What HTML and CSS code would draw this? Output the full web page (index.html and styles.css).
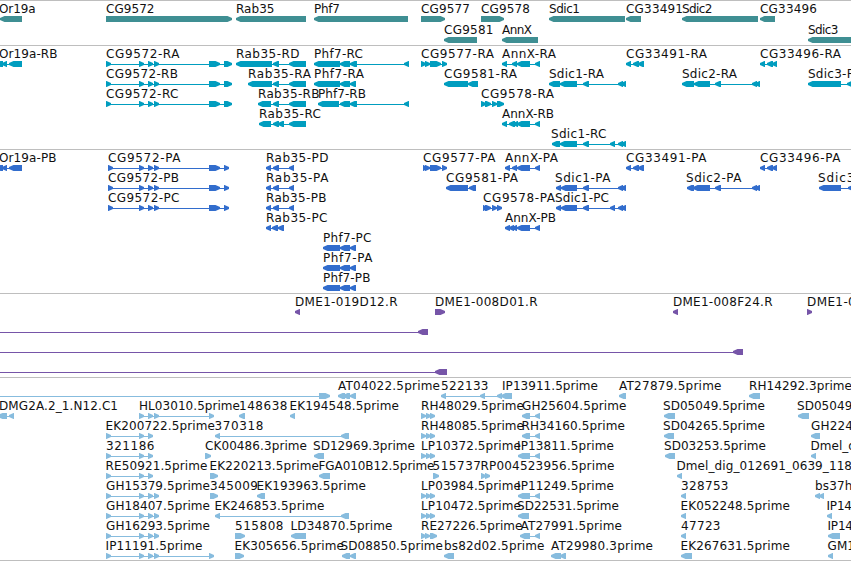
FILE: index.html
```
<!DOCTYPE html>
<html lang="en">
<head>
    <meta charset="UTF-8">
    <meta name="viewport" content="width=device-width, initial-scale=1.0">
    <title>Genome Browser</title>
    <link rel="stylesheet" href="styles.css">
</head>
<body>
    <main class="browser">
        <section class="track genes" id="genes"></section>
        <section class="track transcripts" id="transcripts"></section>
        <section class="track proteins" id="proteins"></section>
        <section class="track clones" id="clones"></section>
        <section class="track ests" id="ests"></section>
    </main>

    <script src="tracks.js"></script>
</body>
</html>
```
FILE: styles.css
```
* {
    margin: 0;
    padding: 0;
    box-sizing: border-box;
}
body {
    background: #fff;
    overflow: hidden;
}
.browser {
    width: 851px;
    height: 561px;
    overflow: hidden;
    border-bottom: 1px solid #bebebe;
}
.track {
    border-top: 1px solid #bebebe;
}
.row {
    display: block;
    width: 100%;
    height: 20px;
    overflow: visible;
}
.row text {
    font-family: "DejaVu Sans", sans-serif;
    font-size: 12px;
    fill: #111;
}
/* arrows and the intron line between them */
.row path, .row rect {
    fill: var(--glyph);
}

.genes {
    --glyph: #3f8f93;
    height: 45px;
}
.genes .row {
    height: 21px;
}
.transcripts {
    --glyph: #009dbf;
    height: 104px;
}
.proteins {
    --glyph: #326dcd;
    height: 144px;
}
.clones {
    --glyph: #7655a8;
    height: 84px;
}
.ests {
    --glyph: #87bcde;
    height: 183px;
}
```
FILE: tracks.js
```
// Each feature: [label, label start, label end, strand, blocks]
const cgR = [[106, 111], [139, 144], [148, 153], [154, 159], [209, 220], [224, 232]];
const cgP = [[108, 113], [139, 144], [148, 153], [154, 159], [209, 220], [224, 229]];
const or19a = [[-4, 3], [2, 7], [9, 22]];
const rabP = [[266, 271], [273, 279], [289, 294]];
const phfP = [[323, 340], [340, 350], [350, 356]];
const cg33491 = [[626, 631], [633, 639], [638, 644]];
const cg33496 = [[760, 765], [767, 773], [772, 777]];
const est3 = [[106, 111], [139, 144], [148, 153]];
const est4 = [[106, 111], [139, 144], [148, 153], [154, 159]];
const lp = [[421, 426], [426, 431], [430, 435]];
const ip = [[518, 530], [535, 540]];

const tracks = {
    genes: [
        [
            ['Or19a', -1, 35.5, '<', [[0, 22]]],
            ['CG9572', 106, 154.5, '>', [[106, 232]]],
            ['Rab35', 236, 274.5, '<', [[236, 306]]],
            ['Phf7', 314, 340, '<', [[314, 408]]],
            ['CG9577', 421, 470, '>', [[421, 445]]],
            ['CG9578', 481, 530, '>', [[481, 504]]],
            ['Sdic1', 549, 580, '<', [[549, 625]]],
            ['CG33491', 626, 683, '<', [[626, 641]]],
            ['Sdic2', 682, 712.5, '<', [[682, 758]]],
            ['CG33496', 760, 817, '<', [[760, 775]]]
        ],
        [
            ['CG9581', 444, 493.5, '<', [[444, 477]]],
            ['AnnX', 502, 532, '<', [[502, 538]]],
            ['Sdic3', 808, 838.5, '<', [[808, 860]]]
        ]
    ],
    transcripts: [
        [
            ['Or19a-RB', -1, 57.5, '<', or19a],
            ['CG9572-RA', 106, 179.5, '>', cgR],
            ['Rab35-RD', 236, 299.5, '<', [[236, 272], [273, 279], [289, 306]]],
            ['Phf7-RC', 314, 363, '<', [[314, 340], [340, 350], [350, 357], [404, 409]]],
            ['CG9577-RA', 421, 494, '>', [[421, 426], [425, 430], [430, 441], [442, 447]]],
            ['AnnX-RA', 502, 556, '<', [[502, 507], [512, 517], [517, 530], [535, 540]]],
            ['CG33491-RA', 626, 707, '<', cg33491],
            ['CG33496-RA', 760, 841, '<', cg33496]
        ],
        [
            ['CG9572-RB', 106, 178, '>', cgR],
            ['Rab35-RA', 248, 311, '<', [[248, 272], [273, 279], [289, 306]]],
            ['Phf7-RA', 314, 364, '<', [[314, 340], [340, 350], [350, 356]]],
            ['CG9581-RA', 444, 517, '<', [[444, 468], [468, 478]]],
            ['Sdic1-RA', 549, 604, '<', [[549, 560], [560, 577], [583, 589], [618, 623], [621, 626]]],
            ['Sdic2-RA', 682, 737, '<', [[682, 694], [694, 710], [715, 721], [752, 757], [755, 760]]],
            ['Sdic3-RA', 808, 863, '<', [[808, 841], [847, 853]]]
        ],
        [
            ['CG9572-RC', 106, 178.5, '>', cgR],
            ['Rab35-RB', 258, 319.5, '<', [[258, 271], [273, 279], [289, 306]]],
            ['Phf7-RB', 318, 366, '<', [[318, 339], [340, 350], [350, 357], [404, 409]]],
            ['CG9578-RA', 481, 554, '>', [[481, 486], [485, 491], [492, 497], [497, 504]]]
        ],
        [
            ['Rab35-RC', 259, 321, '<', [[259, 271], [273, 279], [278, 284], [289, 306]]],
            ['AnnX-RB', 502, 554, '<', [[502, 507], [509, 515], [513, 518], [517, 530], [535, 540]]]
        ],
        [
            ['Sdic1-RC', 551, 606.5, '<', [[552, 560], [560, 577], [583, 589], [610, 615], [618, 623], [621, 626]]]
        ]
    ],
    proteins: [
        [
            ['Or19a-PB', -1, 56.5, '<', or19a],
            ['CG9572-PA', 108, 180.5, '>', cgP],
            ['Rab35-PD', 266, 328.5, '<', rabP],
            ['CG9577-PA', 423, 495.5, '>', [[423, 427], [425, 430], [430, 441], [442, 447]]],
            ['AnnX-PA', 505, 558, '<', [[505, 510], [512, 517], [517, 530], [535, 540]]],
            ['CG33491-PA', 626, 706.5, '<', cg33491],
            ['CG33496-PA', 760, 840.5, '<', cg33496]
        ],
        [
            ['CG9572-PB', 108, 179, '>', cgP],
            ['Rab35-PA', 266, 328.5, '<', rabP],
            ['CG9581-PA', 446, 518, '<', [[446, 468], [469, 476]]],
            ['Sdic1-PA', 555, 610.5, '<', [[556, 561], [561, 577], [583, 589], [618, 623], [621, 626]]],
            ['Sdic2-PA', 686, 741.5, '<', [[687, 694], [693, 710], [715, 721], [752, 757], [755, 760]]],
            ['Sdic3-PA', 818, 876, '<', [[819, 841], [848, 853]]]
        ],
        [
            ['CG9572-PC', 108, 179.5, '>', cgP],
            ['Rab35-PB', 266, 326.5, '<', rabP],
            ['CG9578-PA', 483, 555, '>', [[483, 487], [485, 491], [492, 497], [497, 502]]],
            ['Sdic1-PC', 555, 609, '<', [[556, 561], [561, 577], [583, 589], [610, 615], [618, 623], [621, 626]]]
        ],
        [
            ['Rab35-PC', 266, 327.5, '<', [[266, 271], [272, 278], [278, 284]]],
            ['AnnX-PB', 505, 556, '<', [[505, 510], [509, 514], [512, 517], [517, 530], [535, 540]]]
        ],
        [['Phf7-PC', 323, 371.5, '<', phfP]],
        [['Phf7-PA', 323, 372.5, '<', phfP]],
        [['Phf7-PB', 323, 370.5, '<', phfP]]
    ],
    clones: [
        [
            ['DME1-019D12.R', 295, 397.5, '<', [[295, 300]]],
            ['DME1-008D01.R', 435, 537.5, '>', [[435, 445]]],
            ['DME1-008F24.R', 673, 772.5, '<', [[673, 678]]],
            ['DME1-008D01.F', 807, 909, '>', [[807, 812]]]
        ],
        [['', 0, 0, '<', [[-20, -10], [418, 428]]]],
        [['', 0, 0, '<', [[-20, -10], [733, 743]]]],
        [['', 0, 0, '<', [[-20, -10], [435, 447]]]]
    ],
    ests: [
        [
            ['', 0, 0, '>', [[-20, -10], [319, 330]]],
            ['AT04022.5prime', 338, 440, '<', [[338, 345], [343, 350], [350, 356]]],
            ['522133', 441, 488.5, '<', [[441, 446], [480, 485], [497, 502]]],
            ['IP13911.5prime', 502, 598, '<', [[501, 512]]],
            ['AT27879.5prime', 619, 721.5, '<', [[619, 626]]],
            ['RH14292.3prime', 749, 852, '<', [[749, 760]]]
        ],
        [
            ['DMG2A.2_1.N12.C1', -1, 118, '<', [[-2, 7], [9, 14]]],
            ['HL03010.5prime', 139, 240, '>', [[139, 144], [148, 153], [154, 159], [209, 214]]],
            ['148638', 239, 287.5, '<', [[239, 245]]],
            ['EK194548.5prime', 289.5, 399, '<', [[290, 295]]],
            ['RH48029.5prime', 421, 524, '>', lp],
            ['GH25604.5prime', 522, 626.5, '<', [[522, 530], [535, 540]]],
            ['SD05049.5prime', 663, 765, '<', [[664, 675]]],
            ['SD05049.3prime', 797, 899, '<', [[798, 809]]]
        ],
        [
            ['EK200722.5prime', 105.5, 215, '>', est3],
            ['370318', 214.5, 263.5, '<', [[215, 220], [341, 349]]],
            ['RH48085.5prime', 421, 524, '>', lp],
            ['RH34160.5prime', 521.5, 625, '<', [[522, 530], [535, 540]]],
            ['SD04265.5prime', 663, 765, '<', [[664, 674]]],
            ['GH22473.3prime', 811, 916, '<', [[811, 820]]]
        ],
        [
            ['321186', 106, 154.5, '>', est3],
            ['CK00486.3prime', 205, 307, '>', [[205, 211]]],
            ['SD12969.3prime', 313, 415, '<', [[314, 324]]],
            ['LP10372.5prime', 421, 521, '>', lp],
            ['IP13811.5prime', 517, 614, '<', ip],
            ['SD03253.5prime', 664, 766, '<', [[665, 675]]],
            ['Dmel_dig', 810.5, 867, '<', [[811, 816]]]
        ],
        [
            ['RE50921.5prime', 105.5, 207.5, '>', est3],
            ['EK220213.5prime', 209.5, 319, '>', [[210, 218]]],
            ['FGA010B12.5prime', 318.5, 434.5, '<', [[319, 330]]],
            ['515737', 432.5, 481, '>', [[433, 439]]],
            ['RP004523956.5prime', 480.5, 614.5, '>', [[481, 486], [485, 490]]],
            ['Dmel_dig_012691_0639_118', 676.5, 852, '<', [[677, 682]]]
        ],
        [
            ['GH15379.5prime', 106, 210, '>', est4],
            ['345009', 210, 258, '>', [[210, 218]]],
            ['EK193963.5prime', 256.5, 366, '<', [[257, 265]]],
            ['LP03984.5prime', 421, 521, '>', lp],
            ['IP11249.5prime', 517, 614, '<', ip],
            ['328753', 681, 728.5, '<', [[681, 686]]],
            ['bs37h05', 815, 868, '<', [[815, 820], [819, 824]]]
        ],
        [
            ['GH18407.5prime', 106, 210, '>', est4],
            ['EK246853.5prime', 214.5, 324.5, '<', [[215, 220], [341, 349]]],
            ['LP10472.5prime', 421, 521, '>', lp],
            ['SD22531.5prime', 517, 619, '<', [[518, 529]]],
            ['EK052248.5prime', 680.5, 790, '<', [[681, 686]]],
            ['IP14', 826.5, 852, '<', [[827, 832]]]
        ],
        [
            ['GH16293.5prime', 106, 210, '>', est4],
            ['515808', 235, 283.5, '>', [[235, 245]]],
            ['LD34870.5prime', 290.5, 392.5, '<', [[291, 306]]],
            ['RE27226.5prime', 421, 522.5, '>', [[421, 426], [425, 430], [430, 437]]],
            ['AT27991.5prime', 520.5, 622, '<', [[520, 530], [535, 540]]],
            ['47723', 681, 720.5, '<', [[681, 686]]],
            ['IP14', 827.5, 853, '<', [[828, 840]]]
        ],
        [
            ['IP11191.5prime', 105.5, 202.5, '>', [...est4, [209, 214]]],
            ['EK305656.5prime', 234.5, 344, '>', [[235, 244]]],
            ['SD08850.5prime', 340.5, 443, '<', [[342, 350], [350, 356]]],
            ['bs82d02.5prime', 444, 544.5, '<', [[444, 454]]],
            ['AT29980.3prime', 551, 653, '<', [[551, 561], [560, 566]]],
            ['EK267631.5prime', 680.5, 790, '<', [[681, 692]]],
            ['GM1', 827.5, 855, '<', [[828, 833]]]
        ]
    ]
};

const BASELINE = 12;
const TOP = 15;
const HEIGHT = 6;
const HEAD = 5;

function arrow(x1, x2, strand) {
    const head = Math.min(HEAD, x2 - x1);
    const mid = TOP + HEIGHT / 2;
    const bottom = TOP + HEIGHT;
    if (strand === '>') {
        return `M${x1} ${TOP}H${x2 - head + 0.5}L${x2} ${mid - 1}V${mid + 1}L${x2 - head + 0.5} ${bottom}H${x1}Z`;
    }
    return `M${x2} ${TOP}H${x1 + head - 0.5}L${x1} ${mid - 1}V${mid + 1}L${x1 + head - 0.5} ${bottom}H${x2}Z`;
}

function drawFeature([label, x, end, strand, blocks]) {
    const first = blocks[0][0];
    const last = blocks[blocks.length - 1][1];
    let out = '';
    if (blocks.length > 1) {
        out += `<rect x="${first + 1}" y="${TOP + 3}" width="${last - first - 2}" height="1"/>`;
    }
    blocks.forEach(([a, b]) => {
        out += `<path d="${arrow(a, b, strand)}"/>`;
    });
    if (label) {
        out += `<text x="${x}" y="${BASELINE}" textLength="${end - x}">${label}</text>`;
    }
    return out;
}

Object.keys(tracks).forEach(id => {
    document.getElementById(id).innerHTML = tracks[id]
        .map(row => `<svg class="row">${row.map(drawFeature).join('')}</svg>`)
        .join('');
});
```
